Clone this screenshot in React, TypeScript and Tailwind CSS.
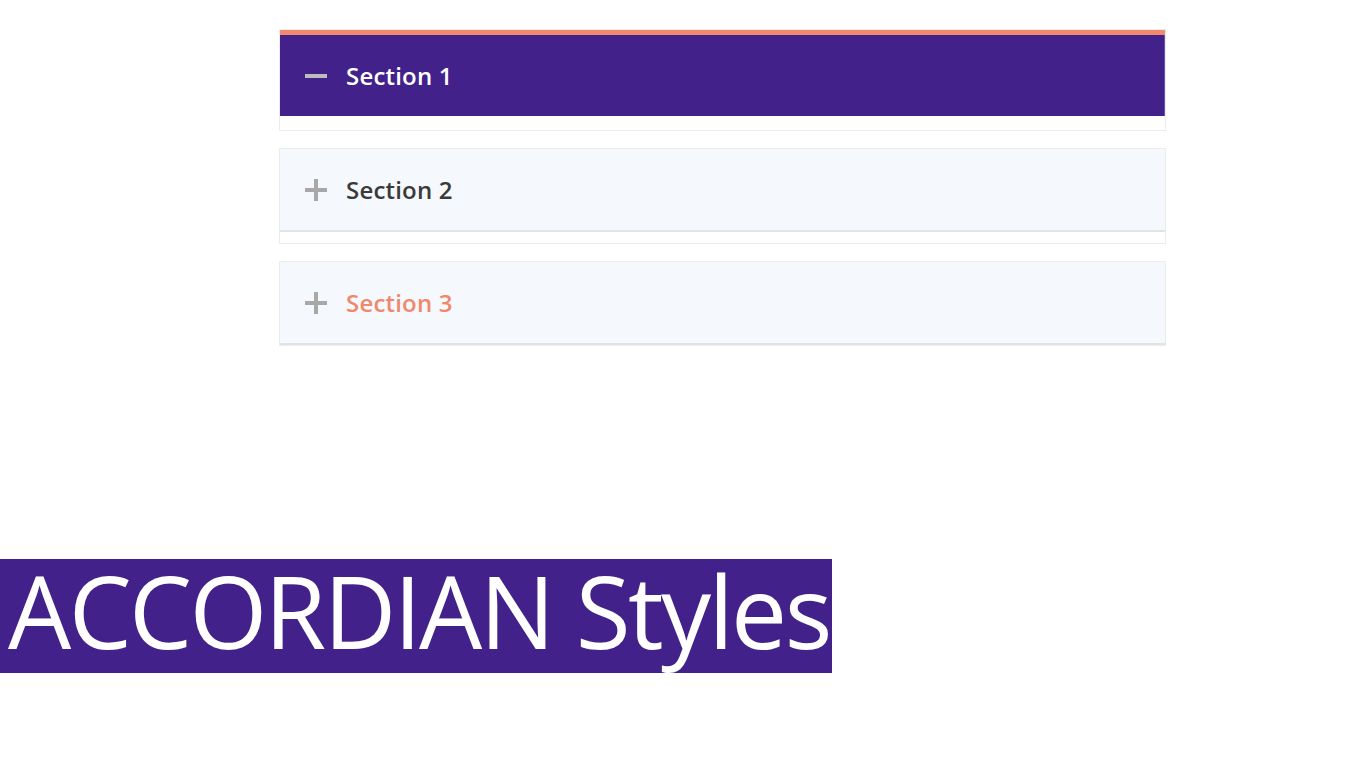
import React, { useState } from "react";

const sections = [
  { id: 1, title: "Section 1" },
  { id: 2, title: "Section 2" },
  { id: 3, title: "Section 3" },
];

const PlusMinus = ({ open }: { open: boolean }) => (
  <svg width="22" height="22" viewBox="0 0 22 22" className="shrink-0">
    <rect x="0" y="9" width="22" height="4" fill={open ? "#bdbdbd" : "#a8a8a8"} />
    {!open && <rect x="9" y="0" width="4" height="22" fill="#a8a8a8" />}
  </svg>
);

export default function App() {
  const [openId, setOpenId] = useState(1);

  return (
    <div className="w-[1366px] h-[768px] bg-white relative overflow-hidden" style={{ fontFamily: '"Open Sans", "Noto Sans", sans-serif' }}>
      <div className="pt-[29px] pl-[279px] w-[1166px] flex flex-col gap-[17px]">
        {sections.map((s) => {
          const open = openId === s.id;
          return (
            <div key={s.id} className="w-[887px] border border-[#ececec]">
              {open ? (
                <>
                  <div className="h-[5px] bg-[#f28b6e]" />
                  <button
                    onClick={() => setOpenId(0)}
                    className="w-full h-[81px] bg-[#42218a] border-r border-[#6a4fc0] flex items-center gap-[19px] pl-[25px] text-left"
                  >
                    <PlusMinus open />
                    <span className="text-white text-[24px] font-semibold tracking-[0.2px]">{s.title}</span>
                  </button>
                  <div className="h-[14px] bg-white" />
                </>
              ) : (
                <>
                  <button
                    onClick={() => setOpenId(s.id)}
                    className="w-full h-[83px] bg-[#f5f8fd] border-b-2 border-[#e2e3e6] flex items-center gap-[19px] pl-[25px] text-left"
                  >
                    <PlusMinus open={false} />
                    <span
                      className={`text-[24px] font-semibold tracking-[0.2px] ${
                        s.id === 3 ? "text-[#f0896c]" : "text-[#3a3a3a]"
                      }`}
                    >
                      {s.title}
                    </span>
                  </button>
                  {s.id === 2 && <div className="h-[11px] bg-white" />}
                </>
              )}
            </div>
          );
        })}
      </div>

      <div className="absolute left-0 top-[559px] w-[832px] h-[114px] bg-[#42218a] pl-[8px] pt-[1px]">
        <span className="block text-white text-[100px] leading-[100px] whitespace-nowrap tracking-[-2.6px]">
          ACCORDIAN Styles
        </span>
      </div>
    </div>
  );
}
